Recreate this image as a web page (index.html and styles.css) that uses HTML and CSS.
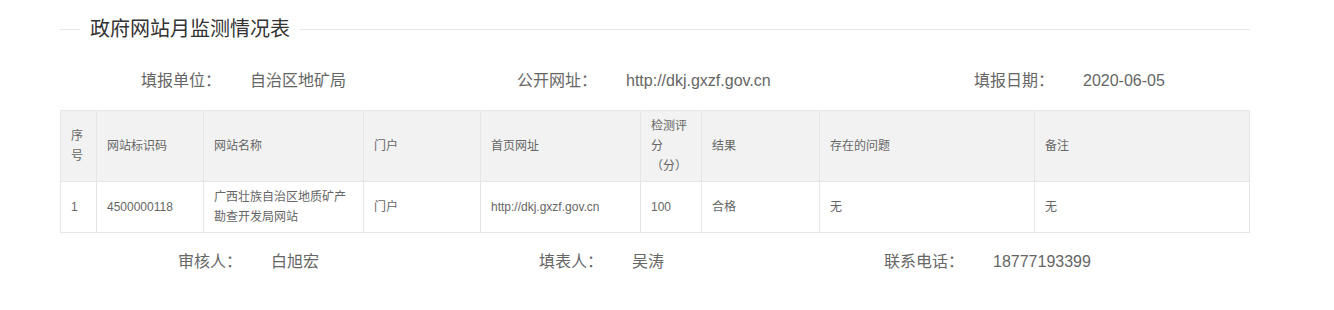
FILE: index.html
```html
<!DOCTYPE html>
<html lang="zh-CN">
<head>
<meta charset="utf-8">
<title>政府网站月监测情况表</title>
<link rel="stylesheet" href="styles.css">
</head>
<body>
<div class="page">
  <div class="title-row">
    <span class="title-line short"></span>
    <h1 class="title">政府网站月监测情况表</h1>
    <span class="title-line long"></span>
  </div>

  <div class="info-row top">
    <div class="info"><span class="label">填报单位：</span><span class="value">自治区地矿局</span></div>
    <div class="info"><span class="label">公开网址：</span><span class="value">http://dkj.gxzf.gov.cn</span></div>
    <div class="info"><span class="label">填报日期：</span><span class="value">2020-06-05</span></div>
  </div>

  <table class="grid">
    <colgroup>
      <col class="c1"><col class="c2"><col class="c3"><col class="c4"><col class="c5"><col class="c6"><col class="c7"><col class="c8"><col class="c9">
    </colgroup>
    <thead>
      <tr>
        <th>序号</th>
        <th>网站标识码</th>
        <th>网站名称</th>
        <th>门户</th>
        <th>首页网址</th>
        <th>检测评分（分）</th>
        <th>结果</th>
        <th>存在的问题</th>
        <th>备注</th>
      </tr>
    </thead>
    <tbody>
      <tr>
        <td>1</td>
        <td>4500000118</td>
        <td>广西壮族自治区地质矿产勘查开发局网站</td>
        <td>门户</td>
        <td>http://dkj.gxzf.gov.cn</td>
        <td>100</td>
        <td>合格</td>
        <td>无</td>
        <td>无</td>
      </tr>
    </tbody>
  </table>

  <div class="info-row bottom">
    <div class="info"><span class="label">审核人：</span><span class="value">白旭宏</span></div>
    <div class="info"><span class="label">填表人：</span><span class="value">吴涛</span></div>
    <div class="info"><span class="label">联系电话：</span><span class="value">18777193399</span></div>
  </div>
</div>
</body>
</html>
```

FILE: styles.css
```css
html, body {
  margin: 0;
  padding: 0;
  background: #fff;
}

body {
  font-family: "Liberation Sans", "Noto Sans CJK SC", sans-serif;
  color: #666;
}

.page {
  width: 1190px;
  margin-left: 60px;
  padding-top: 17px;
}

.title-row {
  display: flex;
  align-items: center;
  height: 24px;
}

.title-line {
  height: 1px;
  background: #e6e6e6;
}

.title-line.short {
  width: 20px;
}

.title-line.long {
  flex: 1;
}

.title {
  margin: 0;
  padding: 0 10px;
  font-size: 20px;
  font-weight: normal;
  line-height: 24px;
  color: #333;
}

.info-row {
  display: grid;
  font-size: 16px;
  line-height: 38px;
  color: #666;
}

.info-row.top {
  margin-top: 21px;
  margin-bottom: 10px;
  grid-template-columns: 376px 457px auto;
  padding-left: 81px;
}

.info-row.bottom {
  margin-top: 10px;
  grid-template-columns: 361px 345px auto;
  padding-left: 118px;
}

.info {
  display: flex;
  white-space: nowrap;
}

.label {
  margin-right: 29px;
}

.grid {
  width: 1190px;
  table-layout: fixed;
  border-collapse: collapse;
  font-size: 12px;
  line-height: 20px;
  color: #666;
}

.grid th,
.grid td {
  border: 1px solid #e6e6e6;
  padding: 5px 10px;
  text-align: left;
  font-weight: normal;
  vertical-align: middle;
}

.grid thead th {
  background: #f2f2f2;
}

.c1 { width: 36px; }
.c2 { width: 107px; }
.c3 { width: 160px; }
.c4 { width: 117px; }
.c5 { width: 160px; }
.c6 { width: 61px; }
.c7 { width: 118px; }
.c8 { width: 215px; }
.c9 { width: 215px; }
```
